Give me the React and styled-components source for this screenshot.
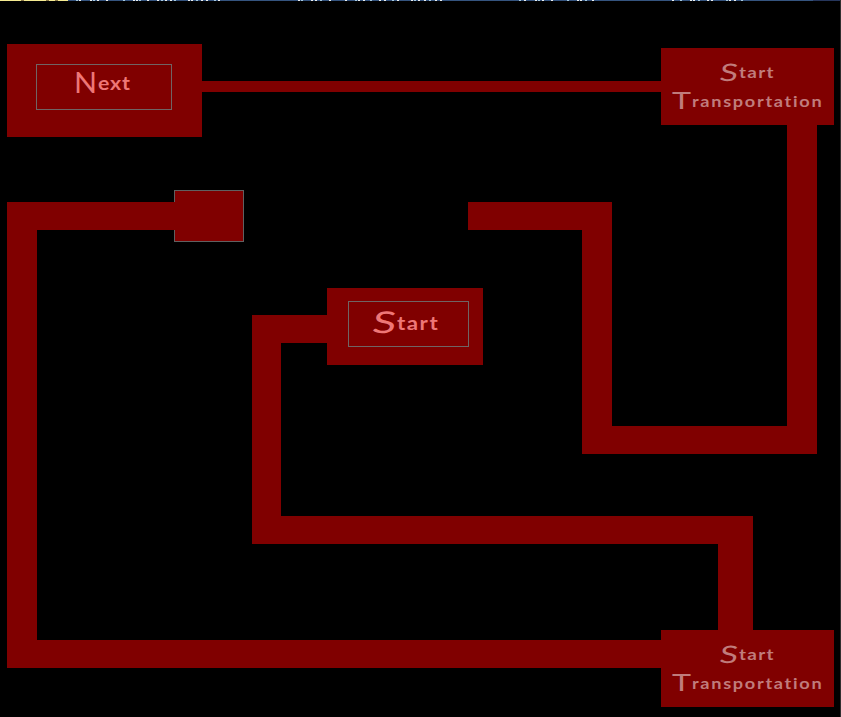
import React from 'react';
import styled, { createGlobalStyle } from 'styled-components';

const Global = createGlobalStyle`
  * { box-sizing: border-box; }
  html, body { margin: 0; background: #000; overflow: hidden; }
`;

const Board = styled.main`
  position: relative;
  width: 841px;
  height: 717px;
  background: #000;
  overflow: hidden;
  border-right: 1px solid #303030;
  font-family: Lato, "Open Sans", sans-serif;
`;

const Strip = styled.div`
  height: 1px;
  background: linear-gradient(90deg, #f5eb92 0 68px, #35547f 68px 813px, #26365c 813px);
`;

const Marks = styled.svg`
  display: block;
`;

/* A piece of the maze, placed on the free canvas. */
const Piece = styled.div`
  position: absolute;
  left: ${(p) => p.$x}px;
  top: ${(p) => p.$y}px;
  width: ${(p) => p.$w}px;
  height: ${(p) => p.$h}px;
  background: #800000;
`;

const Goal = styled(Piece)`
  border: 1px solid #606060;
`;

const Room = styled(Piece)`
  display: flex;
  flex-direction: column;
  align-items: flex-start;
  padding: ${(p) => p.$pad};
`;

const Button = styled.button`
  display: flex;
  align-items: flex-start;
  width: ${(p) => p.$w}px;
  height: 46px;
  padding: ${(p) => p.$pad};
  border: 1px solid #706464;
  background: transparent;
  font: inherit;
  text-align: left;
`;

const Word = styled.span`
  display: flex;
  align-items: baseline;
  height: ${(p) => p.$h}px;
  margin-left: ${(p) => p.$indent || 0}px;
  line-height: 24px;
  white-space: nowrap;
  color: ${(p) => (p.$dim ? '#c07c7c' : '#ee7777')};
`;

const Initial = styled.span`
  flex: none;
  width: ${(p) => p.$w}px;
  font-size: ${(p) => p.$size}px;
  transform-origin: 0 80%;
  transform: translateY(${(p) => p.$drop}px) skewX(${(p) => p.$skew || 0}deg) scaleX(${(p) => p.$stretch || 1});
`;

const Rest = styled.span`
  font-size: ${(p) => p.$size}px;
  font-weight: 700;
  letter-spacing: ${(p) => p.$gap}px;
  transform-origin: 0 50%;
  transform: scaleX(${(p) => p.$stretch});
`;

const paths = [
  [202, 81, 460, 11],
  [787, 125, 30, 329],
  [582, 426, 235, 28],
  [582, 202, 30, 252],
  [468, 202, 144, 28],
  [7, 202, 30, 466],
  [7, 640, 655, 28],
  [252, 315, 76, 28],
  [252, 315, 29, 229],
  [252, 516, 501, 28],
  [718, 516, 35, 115],
];

const marks = [
  76, 79, 90, 93, 97, 106, 123, 133, 136, 139, 147, 157, 161, 165, 170, 174,
  188, 191, 196, 201, 206, 214, 218, 298, 301, 311, 315, 320, 329, 345, 355,
  358, 363, 370, 379, 384, 392, 397, 411, 414, 418, 424, 429, 435, 440, 519,
  524, 535, 538, 542, 551, 567, 577, 580, 585, 592, 672, 680, 690, 693, 698,
  707, 711, 726, 729, 734, 741,
];

function Transportation({ y }) {
  return (
    <Room $x={661} $y={y} $w={173} $h={77} $pad="9px 0 0 11px">
      <Word $h={29} $indent={47} $dim>
        <Initial $size={24} $w={20} $drop={2.5} $skew={-8} $stretch={1.4}>S</Initial>
        <Rest $size={16} $gap={1.1} $stretch={1.18}>tart</Rest>
      </Word>
      <Word $h={28} $dim>
        <Initial $size={23} $w={20} $drop={2} $stretch={1.4}>T</Initial>
        <Rest $size={15.5} $gap={1.45} $stretch={1.17}>ransportation</Rest>
      </Word>
    </Room>
  );
}

export default function App() {
  return (
    <>
      <Global />
      <Board>
        <Strip>
          <Marks width="840" height="1">
            {marks.map((x, i) => (
              <rect key={x} x={x} y="0" width="2" height="1" fill={i % 3 ? '#e9eef0' : '#a5c9df'} />
            ))}
            {[21, 46, 55].map((x) => (
              <rect key={x} x={x} y="0" width="3" height="1" fill="#8a7748" />
            ))}
          </Marks>
        </Strip>
        <Goal $x={174} $y={190} $w={70} $h={52} />
        {paths.map(([x, y, w, h], i) => (
          <Piece key={i} $x={x} $y={y} $w={w} $h={h} />
        ))}
        <Piece $x={36} $y={202} $w={140} $h={28} />
        <Transportation y={48} />
        <Transportation y={630} />
        <Room $x={7} $y={44} $w={195} $h={93} $pad="20px 0 0 29px">
          <Button $w={136} $pad="2px 0 0 37px">
            <Word $h={30}>
              <Initial $size={28} $w={24} $drop={2.5} $stretch={1.08}>N</Initial>
              <Rest $size={19} $gap={0.8} $stretch={1.12}>ext</Rest>
            </Word>
          </Button>
        </Room>
        <Room $x={327} $y={288} $w={156} $h={77} $pad="13px 0 0 21px">
          <Button $w={121} $pad="4px 0 0 23px">
            <Word $h={30}>
              <Initial $size={30} $w={25} $drop={3} $skew={-8} $stretch={1.45}>S</Initial>
              <Rest $size={19} $gap={1.3} $stretch={1.17}>tart</Rest>
            </Word>
          </Button>
        </Room>
      </Board>
    </>
  );
}
